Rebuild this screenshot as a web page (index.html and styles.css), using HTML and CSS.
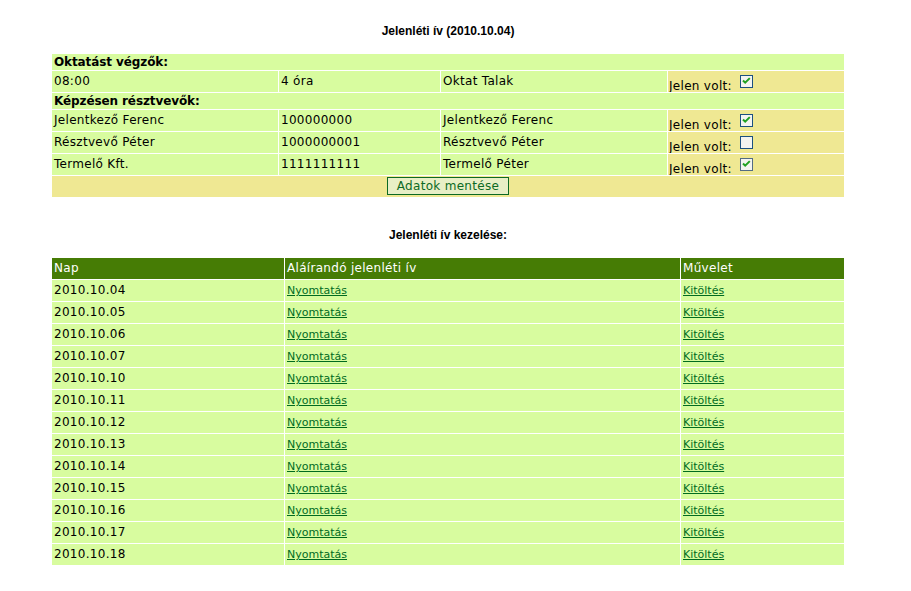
FILE: index.html
```html
<!DOCTYPE html>
<html lang="hu">
<head>
    <meta charset="UTF-8">
    <title>Jelenléti ív</title>
    <link rel="stylesheet" href="styles.css">
</head>
<body>
    <div class="page">
        <h1 class="title">Jelenléti ív (2010.10.04)</h1>
        <form class="sheet-form" onsubmit="return false">
            <table class="sheet">
                <colgroup>
                    <col class="c1"><col class="c2"><col class="c3"><col class="c4">
                </colgroup>
                <tr class="section"><td colspan="4">Oktatást végzők:</td></tr>
                <tr class="row">
                    <td>08:00</td>
                    <td>4 óra</td>
                    <td>Oktat Talak</td>
                    <td class="present">Jelen volt: <svg class="box" width="13" height="13" viewBox="0 0 13 13"><rect x=".5" y=".5" width="12" height="12" fill="#f4f4f0" stroke="#1c5180"/><path d="M3 5.5l2.2 2.2 4.6-4.6" stroke="#21a121" stroke-width="2" fill="none"/></svg></td>
                </tr>
                <tr class="section"><td colspan="4">Képzésen résztvevők:</td></tr>
                <tr class="row">
                    <td>Jelentkező Ferenc</td>
                    <td>100000000</td>
                    <td>Jelentkező Ferenc</td>
                    <td class="present">Jelen volt: <svg class="box" width="13" height="13" viewBox="0 0 13 13"><rect x=".5" y=".5" width="12" height="12" fill="#f4f4f0" stroke="#1c5180"/><path d="M3 5.5l2.2 2.2 4.6-4.6" stroke="#21a121" stroke-width="2" fill="none"/></svg></td>
                </tr>
                <tr class="row">
                    <td>Résztvevő Péter</td>
                    <td>1000000001</td>
                    <td>Résztvevő Péter</td>
                    <td class="present">Jelen volt: <svg class="box" width="13" height="13" viewBox="0 0 13 13"><rect x=".5" y=".5" width="12" height="12" fill="#f4f4f0" stroke="#1c5180"/></svg></td>
                </tr>
                <tr class="row">
                    <td>Termelő Kft.</td>
                    <td>1111111111</td>
                    <td>Termelő Péter</td>
                    <td class="present">Jelen volt: <svg class="box" width="13" height="13" viewBox="0 0 13 13"><rect x=".5" y=".5" width="12" height="12" fill="#f4f4f0" stroke="#1c5180"/><rect x=".5" y=".5" width="12" height="12" fill="none" stroke="#888" stroke-dasharray="1 1"/><path d="M3 5.5l2.2 2.2 4.6-4.6" stroke="#21a121" stroke-width="2" fill="none"/></svg></td>
                </tr>
                <tr class="actions"><td colspan="4"><button type="submit" class="save">Adatok mentése</button></td></tr>
            </table>
        </form>

        <h2 class="title second">Jelenléti ív kezelése:</h2>
        <table class="list">
            <colgroup>
                <col class="d1"><col class="d2"><col class="d3">
            </colgroup>
            <tr>
                <th>Nap</th>
                <th>Aláírandó jelenléti ív</th>
                <th>Művelet</th>
            </tr>
            <tr><td>2010.10.04</td><td><a href="#">Nyomtatás</a></td><td><a href="#">Kitöltés</a></td></tr>
            <tr><td>2010.10.05</td><td><a href="#">Nyomtatás</a></td><td><a href="#">Kitöltés</a></td></tr>
            <tr><td>2010.10.06</td><td><a href="#">Nyomtatás</a></td><td><a href="#">Kitöltés</a></td></tr>
            <tr><td>2010.10.07</td><td><a href="#">Nyomtatás</a></td><td><a href="#">Kitöltés</a></td></tr>
            <tr><td>2010.10.10</td><td><a href="#">Nyomtatás</a></td><td><a href="#">Kitöltés</a></td></tr>
            <tr><td>2010.10.11</td><td><a href="#">Nyomtatás</a></td><td><a href="#">Kitöltés</a></td></tr>
            <tr><td>2010.10.12</td><td><a href="#">Nyomtatás</a></td><td><a href="#">Kitöltés</a></td></tr>
            <tr><td>2010.10.13</td><td><a href="#">Nyomtatás</a></td><td><a href="#">Kitöltés</a></td></tr>
            <tr><td>2010.10.14</td><td><a href="#">Nyomtatás</a></td><td><a href="#">Kitöltés</a></td></tr>
            <tr><td>2010.10.15</td><td><a href="#">Nyomtatás</a></td><td><a href="#">Kitöltés</a></td></tr>
            <tr><td>2010.10.16</td><td><a href="#">Nyomtatás</a></td><td><a href="#">Kitöltés</a></td></tr>
            <tr><td>2010.10.17</td><td><a href="#">Nyomtatás</a></td><td><a href="#">Kitöltés</a></td></tr>
            <tr><td>2010.10.18</td><td><a href="#">Nyomtatás</a></td><td><a href="#">Kitöltés</a></td></tr>
        </table>
    </div>
</body>
</html>
```

FILE: styles.css
```css
body {
    margin: 0;
    background: #fff;
    color: #000;
    font-family: "DejaVu Sans", Verdana, sans-serif;
    font-size: 12px;
}

.page {
    width: 794px;
    margin-left: 51px;
    padding-top: 24px;
}

.title {
    margin: 0 0 15px;
    font-family: "Liberation Sans", Arial, sans-serif;
    font-size: 12px;
    font-weight: bold;
    line-height: 14px;
    text-align: center;
}

.title.second {
    margin-top: 30px;
}

.sheet-form {
    margin: 0;
}

table {
    width: 794px;
    table-layout: fixed;
    border-collapse: separate;
    border-spacing: 1px;
}

td, th {
    padding: 1px 2px;
    background: #d8fc9f;
    line-height: 15px;
    letter-spacing: 0.3px;
    white-space: nowrap;
    overflow: hidden;
}

/* top table */
.c1 { width: 226px; }
.c2 { width: 161px; }
.c3 { width: 226px; }
.c4 { width: 176px; }

.section td {
    font-weight: bold;
    letter-spacing: -0.1px;
    line-height: 14px;
    height: 14px;
}

.row {
    height: 21px;
}

.sheet td.present {
    background: #efe893;
    vertical-align: top;
    padding: 3px 1px 0;
    line-height: 12px;
}

.box {
    display: inline-block;
    margin: 1px 3px 0 4px;
    vertical-align: 2px;
}

.actions td {
    background: #efe893;
    text-align: center;
    vertical-align: top;
    height: 19px;
    padding: 1px;
}

.save {
    padding: 1px 9px;
    border: 1px solid #0c6a24;
    background: #e8efc6;
    color: #0c6a24;
    font-family: "DejaVu Sans", Verdana, sans-serif;
    font-size: 12px;
    letter-spacing: 0.3px;
    line-height: 14px;
    cursor: pointer;
}

/* bottom table */
.d1 { width: 232px; }
.d2 { width: 395px; }
.d3 { width: 163px; }

.list tr {
    height: 21px;
}

.list th {
    background: #467c05;
    color: #fff;
    font-weight: normal;
    text-align: left;
}

.list a {
    color: #006b1f;
    font-size: 11px;
    letter-spacing: 0;
}
```
